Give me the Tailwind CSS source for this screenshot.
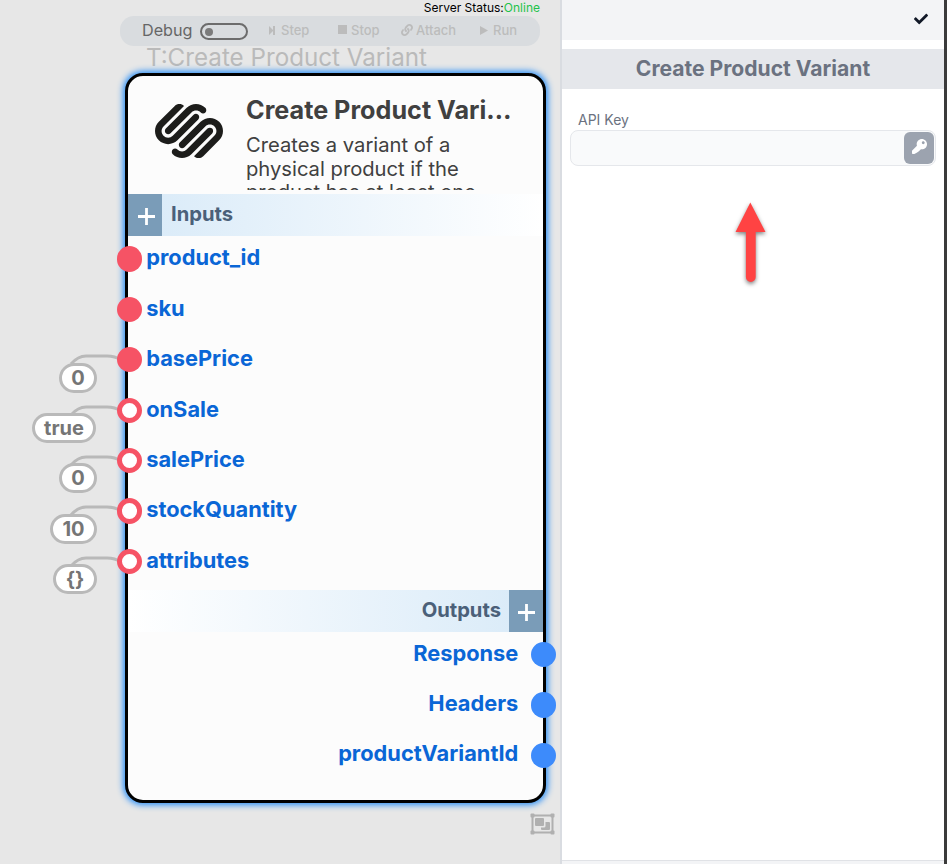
<!DOCTYPE html>
<html lang="en">
<head>
<meta charset="utf-8">
<title>Create Product Variant</title>
<script src="https://cdn.jsdelivr.net/npm/@tailwindcss/browser@4"></script>
</head>
<body class="flex h-[864px] w-[947px] overflow-hidden bg-white font-['Inter',sans-serif]">

<!-- Canvas -->
<main class="relative h-full w-[560px] shrink-0 overflow-hidden bg-[#e7e7e7]">
  <div class="flex h-4 justify-end pr-5 text-[12px] leading-4 text-black"><span class="whitespace-nowrap">Server Status:<span class="text-[#1fc34a]">Online</span></span></div>
  <div class="ml-[120px] flex h-[30px] w-[420px] items-center rounded-[14px] bg-[#d9dcdf] text-[13px] font-medium text-[#bcbcbc]">
    <span class="-mt-px ml-[22px] w-[58px] text-[16.2px] font-normal text-[#666]">Debug</span>
    <span class="mt-px flex h-[17px] w-12 items-center rounded-full border-2 border-[#6c6c6c] pl-[3px]"><i class="size-2 rounded-full bg-[#7b7b7b]"></i></span>
    <span class="ml-[21px] flex w-[69px] items-center"><svg class="-mt-[2px] mr-[6px] h-[9px] w-[6px]" viewBox="0 0 6 9" fill="currentColor"><path d="M0 0L4 4V0H6V9H4V5L0 9z"/></svg>Step</span>
    <span class="flex w-[63px] items-center"><i class="-mt-[3px] mr-1 size-[9px] bg-[#bcbcbc]"></i>Stop</span>
    <span class="flex w-[79px] items-center"><svg class="-mt-[2px] mr-[3px] size-3" viewBox="0 0 512 512" fill="currentColor"><path d="M326.612 185.391c59.747 59.809 58.927 155.698.36 214.59-.11.12-.24.25-.36.37l-67.2 67.2c-59.27 59.27-155.699 59.262-214.96 0-59.27-59.26-59.27-155.7 0-214.96l37.106-37.106c9.84-9.84 26.786-3.3 27.294 10.606.648 17.722 3.826 35.527 9.69 52.721 1.986 5.822.567 12.262-3.783 16.612l-13.087 13.087c-28.026 28.026-28.905 73.66-1.155 101.96 28.024 28.579 74.086 28.749 102.325.51l67.2-67.19c28.191-28.191 28.073-73.757 0-101.83-3.701-3.694-7.429-6.564-10.341-8.569a16.037 16.037 0 0 1-6.947-12.606c-.396-10.567 3.348-21.456 11.698-29.806l21.054-21.055c5.521-5.521 14.182-6.199 20.584-1.731a152.482 152.482 0 0 1 20.522 17.197zM467.547 44.449c-59.261-59.262-155.69-59.27-214.96 0l-67.2 67.2c-.12.12-.25.25-.36.37-58.566 58.892-59.387 154.781.36 214.59a152.454 152.454 0 0 0 20.521 17.196c6.402 4.468 15.064 3.789 20.584-1.731l21.054-21.055c8.35-8.35 12.094-19.239 11.698-29.806a16.037 16.037 0 0 0-6.947-12.606c-2.912-2.005-6.64-4.875-10.341-8.569-28.073-28.073-28.191-73.639 0-101.83l67.2-67.19c28.239-28.239 74.3-28.069 102.325.51 27.75 28.3 26.872 73.934-1.155 101.96l-13.087 13.087c-4.35 4.35-5.769 10.79-3.783 16.612 5.864 17.194 9.042 34.999 9.69 52.721.509 13.906 17.454 20.446 27.294 10.606l37.106-37.106c59.271-59.259 59.271-155.699.001-214.959z"/></svg>Attach</span>
    <span class="flex items-center"><svg class="-mt-[2px] mr-[5px] h-[9px] w-2" viewBox="0 0 8 9" fill="currentColor"><path d="M0 0L8 4.5L0 9z"/></svg>Run</span>
  </div>
  <div class="ml-[146px] h-[25px] text-[24.2px] leading-[23px] whitespace-nowrap text-[#bababa]">T:Create Product Variant</div>

  <!-- Node -->
  <section class="absolute top-[73px] left-[125px] h-[730px] w-[421px] rounded-[18px] border-[3.5px] border-black bg-[#fcfcfc] shadow-[0_0_6px_2px_#2a8ff7]">
    <header class="flex h-[118px] pl-[26.5px]">
      <svg class="mt-[21px] size-[68px] shrink-0" viewBox="0 0 24 24" fill="#1d1d1b"><path d="M22.655 8.719c-1.802-1.801-4.726-1.801-6.564 0l-7.351 7.35c-.45.45-.45 1.2 0 1.65.45.449 1.2.449 1.65 0l7.351-7.351c.899-.899 2.362-.899 3.264 0 .9.9.9 2.364 0 3.264l-7.239 7.239c.9.899 2.362.899 3.263 0l5.589-5.589c1.836-1.838 1.836-4.763.037-6.563zm-2.475 2.437c-.451-.45-1.201-.45-1.65 0l-7.354 7.389c-.9.899-2.361.899-3.262 0-.45-.45-1.2-.45-1.65 0s-.45 1.2 0 1.649c1.801 1.801 4.726 1.801 6.564 0l7.351-7.35c.449-.487.449-1.239.001-1.688zm-2.439-7.35c-1.801-1.801-4.726-1.801-6.564 0l-7.351 7.351c-.45.449-.45 1.199 0 1.649s1.2.45 1.65 0l7.395-7.351c.9-.899 2.371-.899 3.27 0 .451.45 1.201.45 1.65 0 .421-.487.421-1.199-.05-1.649zm-2.475 2.475c-.45-.45-1.2-.45-1.65 0l-7.351 7.389c-.899.9-2.363.9-3.265 0-.9-.899-.9-2.363 0-3.264l7.239-7.239c-.9-.9-2.362-.9-3.263 0L1.35 8.719c-1.8 1.8-1.8 4.725 0 6.563 1.801 1.801 4.725 1.801 6.564 0l7.35-7.351c.451-.488.451-1.238.002-1.65z"/></svg>
      <div class="ml-[23.5px] h-[114px] w-[280px] overflow-hidden pt-[19px] text-[#404040]">
        <h1 class="h-[38px] text-[25.2px] leading-[30px] font-bold whitespace-nowrap">Create Product Vari…</h1>
        <p class="text-[20.2px] leading-[23.700px]">Creates a variant of a<br>physical product if the<br>product has at least one</p>
      </div>
    </header>
    <div class="flex h-[42px] items-center bg-gradient-to-r from-[#d8eaf8] to-white">
      <span class="flex h-full w-[34px] items-center justify-center bg-[#7a9cb8] pl-[2px]"><svg class="mt-[3px] size-[17px]" viewBox="0 0 17 17" stroke="#fff" stroke-width="2.8"><path d="M8.500 0V17M0 8.500H17"/></svg></span>
      <h2 class="-mt-[2px] ml-[9px] text-[20.2px] leading-[30px] font-bold text-[#4b6079]">Inputs</h2>
    </div>
    <ul class="h-[354px] pt-[10.400px] text-[21.800px] font-bold text-[#0a66d6]">
      <li class="-ml-[11px] flex h-[50.4px] items-start"><i class="size-[25.2px] rounded-full bg-[#f65365]"></i><span class="-mt-px ml-1 leading-6">product_id</span></li>
      <li class="-ml-[11px] flex h-[50.4px] items-start"><i class="size-[25.2px] rounded-full bg-[#f65365]"></i><span class="-mt-px ml-1 leading-6">sku</span></li>
      <li class="relative -ml-[11px] flex h-[50.4px] items-start"><svg class="absolute top-[3px] -left-[50px] h-4 w-[56px]" viewBox="0 0 56 16" fill="none" stroke="#b9b9b9" stroke-width="3"><path d="M4 14Q11 6 19 6H40Q48 6 54 10"/></svg><b class="absolute top-[15.500px] right-[446px] flex h-[30px] w-[38px] items-center justify-center rounded-full border-[3.5px] border-[#b9b9b9] bg-white text-[20px] font-bold text-[#757575]">0</b><i class="relative size-[25.2px] rounded-full bg-[#f65365]"></i><span class="-mt-px ml-1 leading-6">basePrice</span></li>
      <li class="relative -ml-[11px] flex h-[50.4px] items-start"><svg class="absolute top-[3px] -left-[50px] h-4 w-[56px]" viewBox="0 0 56 16" fill="none" stroke="#b9b9b9" stroke-width="3"><path d="M4 14Q11 6 19 6H40Q48 6 54 10"/></svg><b class="absolute top-[15.500px] right-[447px] flex h-[30px] w-[64px] items-center justify-center rounded-full border-[3.5px] border-[#b9b9b9] bg-white text-[20px] font-bold text-[#757575]">true</b><i class="relative size-[25.2px] rounded-full border-[5px] border-[#f65365] bg-white"></i><span class="-mt-px ml-1 leading-6">onSale</span></li>
      <li class="relative -ml-[11px] flex h-[50.4px] items-start"><svg class="absolute top-[3px] -left-[50px] h-4 w-[56px]" viewBox="0 0 56 16" fill="none" stroke="#b9b9b9" stroke-width="3"><path d="M4 14Q11 6 19 6H40Q48 6 54 10"/></svg><b class="absolute top-[15.500px] right-[446px] flex h-[30px] w-[38px] items-center justify-center rounded-full border-[3.5px] border-[#b9b9b9] bg-white text-[20px] font-bold text-[#757575]">0</b><i class="relative size-[25.2px] rounded-full border-[5px] border-[#f65365] bg-white"></i><span class="-mt-px ml-1 leading-6">salePrice</span></li>
      <li class="relative -ml-[11px] flex h-[50.4px] items-start"><svg class="absolute top-[3px] -left-[50px] h-4 w-[56px]" viewBox="0 0 56 16" fill="none" stroke="#b9b9b9" stroke-width="3"><path d="M4 14Q11 6 19 6H40Q48 6 54 10"/></svg><b class="absolute top-[15.500px] right-[446px] flex h-[30px] w-[47px] items-center justify-center rounded-full border-[3.5px] border-[#b9b9b9] bg-white text-[20px] font-bold text-[#757575]">10</b><i class="relative size-[25.2px] rounded-full border-[5px] border-[#f65365] bg-white"></i><span class="-mt-px ml-1 leading-6">stockQuantity</span></li>
      <li class="relative -ml-[11px] flex h-[50.4px] items-start"><svg class="absolute top-[3px] -left-[50px] h-4 w-[56px]" viewBox="0 0 56 16" fill="none" stroke="#b9b9b9" stroke-width="3"><path d="M4 14Q11 6 19 6H40Q48 6 54 10"/></svg><b class="absolute top-[15.500px] right-[446px] flex h-[30px] w-[44px] items-center justify-center rounded-full border-[3.5px] border-[#b9b9b9] bg-white text-[20px] font-bold text-[#757575]">{}</b><i class="relative size-[25.2px] rounded-full border-[5px] border-[#f65365] bg-white"></i><span class="-mt-px ml-1 leading-6">attributes</span></li>
    </ul>
    <div class="flex h-[42px] items-center justify-end bg-gradient-to-l from-[#d8eaf8] to-white">
      <h2 class="-mt-[2px] mr-[8px] text-[20.2px] leading-[30px] font-bold text-[#4b6079]">Outputs</h2>
      <span class="flex h-full w-[34px] items-center justify-center bg-[#7a9cb8]"><svg class="mt-[3px] size-[17px]" viewBox="0 0 17 17" stroke="#fff" stroke-width="2.8"><path d="M8.500 0V17M0 8.500H17"/></svg></span>
    </div>
    <ul class="pt-[10px] text-[21.800px] font-bold text-[#0a66d6]">
      <li class="-mr-[13px] flex h-[50.4px] items-start justify-end"><span class="-mt-px mr-[12.500px] leading-6">Response</span><i class="size-[25.2px] rounded-full bg-[#3d8bfb]"></i></li>
      <li class="-mr-[13px] flex h-[50.4px] items-start justify-end"><span class="-mt-px mr-[12.500px] leading-6">Headers</span><i class="size-[25.2px] rounded-full bg-[#3d8bfb]"></i></li>
      <li class="-mr-[13px] flex h-[50.4px] items-start justify-end"><span class="-mt-[1.500px] mr-[12.500px] leading-6">productVariantId</span><i class="size-[25.2px] rounded-full bg-[#3d8bfb]"></i></li>
    </ul>
  </section>
  <svg class="absolute top-[813px] left-[530px] h-[22px] w-[25px]" viewBox="0 0 25 22" fill="#b0b0b0"><path d="M2.5 2.5H22.5V19.5H2.5z" fill="none" stroke="#b0b0b0" stroke-width="2"/><rect x=".5" y=".5" width="4" height="4" rx="1"/><rect x="20.5" y=".5" width="4" height="4" rx="1"/><rect x=".5" y="17.5" width="4" height="4" rx="1"/><rect x="20.5" y="17.5" width="4" height="4" rx="1"/><rect x="5" y="5" width="9" height="8" rx="1"/><path d="M15.5 9H19a1 1 0 0 1 1 1v6a1 1 0 0 1-1 1h-7a1 1 0 0 1-1-1v-1.500h3a1.500 1.500 0 0 0 1.500-1.500z"/></svg>
</main>

<div class="w-[2px] shrink-0 bg-[#d9dce1]"></div>

<!-- Properties panel -->
<aside class="flex w-[382px] shrink-0 flex-col bg-white">
  <div class="flex h-10 shrink-0 items-center justify-end bg-[#f3f4f6] pr-[16px]"><svg class="-mt-[2px] size-[14px]" viewBox="0 0 512 512" fill="#111827"><path d="M173.898 439.404l-166.400-166.400c-9.997-9.997-9.997-26.206 0-36.204l36.203-36.204c9.997-9.998 26.207-9.998 36.204 0L192 312.690 432.095 72.596c9.997-9.997 26.207-9.997 36.204 0l36.203 36.204c9.997 9.997 9.997 26.206 0 36.204l-294.400 294.401c-9.998 9.997-26.207 9.997-36.204-.001z"/></svg></div>
  <h2 class="mt-[9px] h-10 shrink-0 bg-[#e5e7eb] text-center text-[21.100px] leading-[39px] font-bold text-[#6b7280]">Create Product Variant</h2>
  <label class="mt-[21px] ml-4 h-5 text-[14px] leading-5 text-[#6b7280]">API Key</label>
  <div class="ml-2 flex h-[36px] w-[366px] items-center justify-end rounded-lg border border-[#e5e7eb] bg-[#f9fafb] pr-[1px]"><button class="flex h-8 w-[30px] items-center justify-center rounded-md bg-[#9ca3af]"><svg class="-mt-[3px] size-[15px]" viewBox="0 0 512 512" fill="#fff"><path d="M512 176.001C512 273.203 433.202 352 336 352c-11.220 0-22.190-1.062-32.827-3.069l-24.012 27.014L224 424 160 470 80 512H24c-13.255 0-24-10.745-24-24v-78.059c0-6.365 2.529-12.470 7.029-16.971l161.802-161.802C163.108 213.814 160 195.271 160 176 160 78.798 238.797.001 335.999 0 433.488-.001 512 78.511 512 176.001zM336 128c0 26.510 21.490 48 48 48s48-21.490 48-48-21.490-48-48-48-48 21.490-48 48z"/></svg></button></div>
  <svg class="mt-[32px] ml-[168px] h-[96px] w-[44px] drop-shadow-[0_2px_2px_rgba(0,0,0,0.5)]" viewBox="0 0 44 96" fill="#ff4343"><path d="M20.300 4.500L35.500 34H25.700V79a4.900 4.900 0 0 1-9.800 0V34H5.500z"/></svg>
  <div class="mt-auto h-[4px] border-t border-[#e0e2e6] bg-[#f3f4f6]"></div>
</aside>
<div class="grow bg-[#3b3b3b]"></div>
</body>
</html>
